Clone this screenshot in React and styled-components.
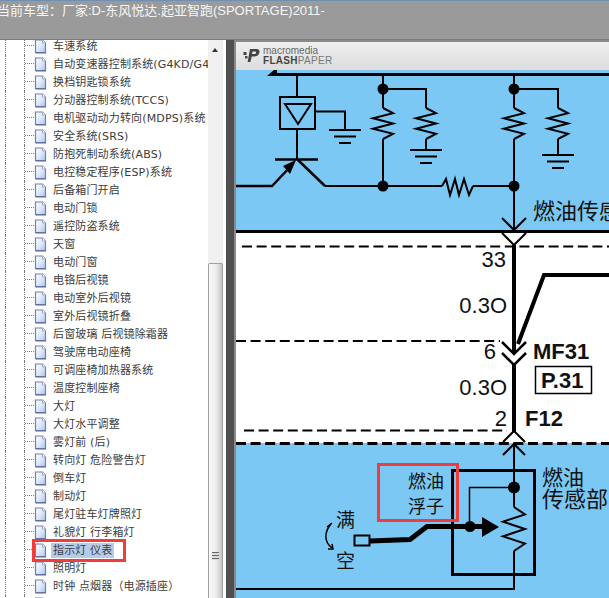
import React from 'react'
import styled, { createGlobalStyle } from 'styled-components'

const GlobalStyle = createGlobalStyle`
  html, body { margin: 0; padding: 0; background: #fff; }
  body { font-family: "DejaVu Sans", "Noto Sans CJK SC", sans-serif; }
`

const TREE_ITEMS = [
  '车速系统', '自动变速器控制系统(G4KD/G4KE)', '换档钥匙锁系统', '分动器控制系统(TCCS)',
  '电机驱动动力转向(MDPS)系统', '安全系统(SRS)', '防抱死制动系统(ABS)', '电控稳定程序(ESP)系统',
  '后备箱门开启', '电动门锁', '遥控防盗系统', '天窗', '电动门窗', '电铬后视镜', '电动室外后视镜',
  '室外后视镜折叠', '后窗玻璃 后视镜除霜器', '驾驶席电动座椅', '可调座椅加热器系统', '温度控制座椅',
  '大灯', '大灯水平调整', '雾灯前 (后)', '转向灯 危险警告灯', '倒车灯', '制动灯', '尾灯驻车灯牌照灯',
  '礼貌灯 行李箱灯', '指示灯 仪表', '照明灯', '时钟 点烟器（电源插座）', '',
]
const SELECTED = '指示灯 仪表'

const DocIcon = () => (
  <svg width="13" height="15" viewBox="0 0 13 15" style={{ flex: 'none' }}>
    <defs>
      <linearGradient id="doc" x1="0" y1="0" x2="1" y2="1">
        <stop offset="0" stopColor="#ffffff" />
        <stop offset="0.5" stopColor="#dfe9fb" />
        <stop offset="1" stopColor="#a9c2ee" />
      </linearGradient>
    </defs>
    <path d="M1.5 1H8.5L11.5 4V13.5H1.5Z" fill="url(#doc)" stroke="#6f80ad" strokeWidth="1.2" />
    <path d="M8.5 1V4H11.5" fill="#fff" stroke="#9aa8c8" />
    <path d="M1.5 14H12" stroke="#56659a" />
  </svg>
)

const Zigzag = ({ x, y, h, a = 10 }) => {
  const s = h / 6
  const d = `M${x} ${y} L${x + a} ${y + s} L${x - a} ${y + 2 * s} L${x + a} ${y + 3 * s} L${x - a} ${y + 4 * s} L${x + a} ${y + 5 * s} L${x} ${y + h}`
  return <path d={d} fill="none" stroke="#000" strokeWidth="2" />
}

const Ground = ({ x, y, w = 16, gap = 6.5 }) => (
  <g stroke="#000" strokeWidth="2">
    <path d={`M${x - w} ${y}H${x + w}`} />
    <path d={`M${x - w + 5} ${y + gap}H${x + w - 5}`} />
    <path d={`M${x - w + 10} ${y + gap * 2}H${x + w - 10}`} />
  </g>
)

const Dot = ({ x, y, r = 5.5 }) => <circle cx={x} cy={y} r={r} fill="#000" />

const Chevron = ({ x, y, up, w = 12, h = 12, sw = 2 }) => (
  <path d={`M${x - w} ${y + (up ? h : 0)}L${x} ${y + (up ? 0 : h)}L${x + w} ${y + (up ? h : 0)}`} fill="none" stroke="#000" strokeWidth={sw} />
)

const Label = ({ x, y, size, anchor, bold, children }) => (
  <DiagramText x={x} y={y} fontSize={size} textAnchor={anchor || 'start'} fontWeight={bold ? 700 : 400}>
    {children}
  </DiagramText>
)

const Schematic = () => (
  <Sheet viewBox="236 70 373 528">
    <rect x="236" y="70" width="373" height="160" fill="#7bc8f4" />
    <rect x="236" y="233" width="373" height="210" fill="#fff" />
    <rect x="236" y="443" width="373" height="155" fill="#7bc8f4" />

    {/* top section */}
    <path d="M267 76L274 70H277V76Z" fill="#000" />
    <path d="M270 74.5H609" stroke="#000" strokeWidth="3" />
    <g fill="none" stroke="#000" strokeWidth="2">
      <path d="M297 76V97" />
      <rect x="280" y="97" width="35" height="32" />
      <path d="M285 104H311L298 124Z" />
      <path d="M315 111.5H345V130" />
      <path d="M297 129V159" />
      <path d="M325 186H442M473 186H514" />
      <path d="M298 160L325 186" strokeWidth="2.5" />
      <path d="M236 186H272L292 165" strokeWidth="2.5" />
      <path d="M383 75V108M383 139V186" />
      <path d="M383 89H426V108M426 139V150" />
      <path d="M514 75V108M514 139V229" />
      <path d="M514 89H558V108M558 139V155" />
    </g>
    <path d="M275 159.5H318" stroke="#000" strokeWidth="2.5" />
    <path d="M296 160L283 166L290 174Z" fill="#000" />
    <Ground x={345} y={130} />
    <Ground x={426} y={150} />
    <Ground x={558} y={155} />
    <Zigzag x={383} y={108} h={31} />
    <Zigzag x={426} y={108} h={31} />
    <Zigzag x={514} y={108} h={31} />
    <Zigzag x={558} y={108} h={31} />
    <path d="M442 186L446 179L450 195L455 179L459 195L464 179L469 195L473 186" fill="none" stroke="#000" strokeWidth="2" />
    <Dot x={383} y={89} />
    <Dot x={514} y={89} />
    <Dot x={383} y={186} />
    <Dot x={514} y={186} />
    <Chevron x={514} y={218} />
    <path d="M236 231.5H609" stroke="#000" strokeWidth="3" />
    <Chevron x={514} y={233} />
    <Label x={533} y={219} size={22}>燃油传感器</Label>

    {/* white section */}
    <path d="M242 246.5H609" stroke="#000" strokeWidth="2" strokeDasharray="10 4.6" />
    <path d="M514 245V352M514 364V432" stroke="#000" strokeWidth="4" />
    <path d="M518 344L544 275H609" fill="none" stroke="#000" strokeWidth="4" />
    <Label x={506} y={267} size={22} anchor="end">33</Label>
    <Label x={507} y={313} size={22} anchor="end">0.3O</Label>
    <path d="M236 341H500" stroke="#000" strokeWidth="2" strokeDasharray="10 4.6" />
    <Chevron x={514} y={342} sw={2.5} />
    <Chevron x={514} y={353} sw={2.5} />
    <Label x={496} y={359} size={22} anchor="end">6</Label>
    <Label x={533} y={359} size={22} bold>MF31</Label>
    <rect x="535.5" y="366.5" width="56" height="27" fill="#fff" stroke="#000" strokeWidth="1.5" />
    <Label x={541} y={388} size={22} bold>P.31</Label>
    <Label x={507} y={395} size={22} anchor="end">0.3O</Label>
    <Label x={507} y={426} size={22} anchor="end">2</Label>
    <Label x={525} y={426} size={22} bold>F12</Label>
    <path d="M244 430.5H507" stroke="#000" strokeWidth="2" strokeDasharray="10 4.6" />

    {/* bottom section */}
    <path d="M236 443.5H609" stroke="#000" strokeWidth="3" strokeDasharray="10 4.6" />
    <Chevron x={514} y={431} up w={11} h={11} />
    <Chevron x={514} y={444} up w={11} h={11} />
    <path d="M514 444V507M514 551V589H236" fill="none" stroke="#000" strokeWidth="2" />
    <rect x="452.5" y="470.5" width="82" height="104" fill="none" stroke="#000" strokeWidth="3" />
    <path d="M514 487.5H469.5V526" fill="none" stroke="#000" strokeWidth="1.5" />
    <Dot x={514} y={487.5} r={6} />
    <Zigzag x={514} y={507} h={44} a={11} />
    <rect x="354.5" y="535.5" width="15" height="10" fill="none" stroke="#000" strokeWidth="2" />
    <path d="M370 541L410 539.5L427 526.5H484" fill="none" stroke="#000" strokeWidth="5" />
    <Dot x={470} y={526.5} />
    <path d="M482 517L499 527L482 537Z" fill="#000" />
    <Label x={408} y={488} size={18}>燃油</Label>
    <Label x={408} y={513} size={18}>浮子</Label>
    <Label x={542} y={485} size={21}>燃油</Label>
    <Label x={542} y={507} size={22}>传感部</Label>
    <Label x={336} y={527} size={19}>满</Label>
    <Label x={336} y={568} size={19}>空</Label>
    <path d="M331 524C324 532 324 542 332 548" fill="none" stroke="#000" strokeWidth="1.5" />
    <path d="M327 527L332 523M328 549L333 549L332 544" fill="none" stroke="#000" strokeWidth="1.5" />
  </Sheet>
)

export default function App() {
  return (
    <Page>
      <GlobalStyle />
      <TitleBar>当前车型：厂家:D-东风悦达.起亚智跑(SPORTAGE)2011-</TitleBar>
      <Body>
        <TreePane>
          {TREE_ITEMS.map((item, i) => (
            <TreeRow key={i}>
              <Indent />
              <Branch />
              <DocIcon />
              <RowLabel $selected={item === SELECTED}>{item}</RowLabel>
            </TreeRow>
          ))}
          <Callout $x={32} $y={499} $w={94} $h={23} />
        </TreePane>
        <ScrollBar>
          <ScrollUp />
          <ScrollThumb>
            <Grip />
          </ScrollThumb>
        </ScrollBar>
        <Splitter />
        <Viewer>
          <ViewerBar>
            <svg width="17" height="16" viewBox="0 0 17 16">
              <path d="M7 1H13.5C16 1 17 3 16.3 5C15.6 7.5 13.5 8.5 11 8.5H8.8L7.4 14H4.6Z" fill="#444" />
              <path d="M9.5 3.4L9 6H11.5C13 6 13.8 4 12.4 3.4Z" fill="#e8e8e8" />
              <rect x="0.5" y="4" width="3" height="3" fill="#444" />
              <rect x="2" y="8" width="2.5" height="2.5" fill="#444" />
            </svg>
            <BrandText>
              <BrandTop>macromedia</BrandTop>
              <BrandBottom>
                <b>FLASH</b>PAPER
              </BrandBottom>
            </BrandText>
          </ViewerBar>
          <SheetWrap>
            <Schematic />
            <Callout $x={141} $y={393} $w={82} $h={59} />
          </SheetWrap>
        </Viewer>
      </Body>
    </Page>
  )
}

const Page = styled.div`
  width: 609px;
  height: 598px;
  overflow: hidden;
  display: flex;
  flex-direction: column;
  background: #fff;
`
const TitleBar = styled.div`
  flex: 0 0 40px;
  box-sizing: border-box;
  border-top: 1px solid #6f8fb5;
  border-bottom: 1px solid #7a7a7a;
  background: #9a9a9a;
  color: #f6f6f6;
  font-family: "Liberation Sans", "Noto Sans CJK SC", sans-serif;
  font-size: 13px;
  line-height: 19px;
  white-space: nowrap;
  text-indent: -3px;
`
const Body = styled.div`
  flex: 1;
  display: flex;
  min-height: 0;
`
const TreePane = styled.div`
  position: relative;
  flex: 0 0 208px;
  overflow: hidden;
  background: #fff;
`
const TreeRow = styled.div`
  display: flex;
  align-items: center;
  height: 18px;
  position: relative;
  top: -3px;
  white-space: nowrap;
`
const Indent = styled.span`
  flex: none;
  align-self: stretch;
  width: 18px;
  margin-left: 5px;
  border-left: 1px dotted #777;
`
const Branch = styled.span`
  flex: none;
  align-self: stretch;
  position: relative;
  width: 9px;
  border-left: 1px dotted #777;
  &::after {
    content: '';
    position: absolute;
    left: 0;
    right: 0;
    top: 8px;
    border-top: 1px dotted #777;
  }
`
const RowLabel = styled.span`
  margin-left: 4px;
  padding: 0 2px;
  font-size: 11px;
  line-height: 15px;
  letter-spacing: 0.15px;
  color: #3c3c3c;
  background: ${p => (p.$selected ? '#b5cbea' : 'transparent')};
`
const Callout = styled.div`
  position: absolute;
  left: ${p => p.$x}px;
  top: ${p => p.$y}px;
  width: ${p => p.$w}px;
  height: ${p => p.$h}px;
  box-sizing: border-box;
  border: 3px solid #f23b3b;
  pointer-events: none;
`
const ScrollBar = styled.div`
  flex: 0 0 15px;
  display: flex;
  flex-direction: column;
  background: #f0f0f0;
`
const ScrollUp = styled.div`
  flex: 0 0 223px;
  position: relative;
  &::before {
    content: '';
    position: absolute;
    left: 4px;
    top: 8px;
    border-left: 3.5px solid transparent;
    border-right: 3.5px solid transparent;
    border-bottom: 4px solid #333;
  }
`
const ScrollThumb = styled.div`
  flex: 1;
  box-sizing: border-box;
  border: 1px solid #a0a0a0;
  border-bottom: none;
  border-radius: 2px 2px 0 0;
  background: linear-gradient(to right, #f6f6f6, #ececec 55%, #c4c4c4);
  position: relative;
`
const Grip = styled.div`
  position: absolute;
  left: 3px;
  top: 288px;
  width: 7px;
  height: 8px;
  background: repeating-linear-gradient(to bottom, #666 0 1px, #ddd 1px 3px);
`
const Splitter = styled.div`
  flex: 0 0 13px;
  box-sizing: border-box;
  border-left: 3px solid #fff;
  border-right: 2px solid #8a8a8a;
  background: #4f4f4f;
`
const Viewer = styled.div`
  flex: 1;
  min-width: 0;
  display: flex;
  flex-direction: column;
  background: #fff;
`
const ViewerBar = styled.div`
  flex: 0 0 30px;
  box-sizing: border-box;
  border-top: 2px solid #8a8a8a;
  display: flex;
  align-items: center;
  gap: 3px;
  padding-left: 7px;
  background: linear-gradient(to bottom, #efefef, #dcdcdc);
`
const BrandText = styled.div`
  display: flex;
  flex-direction: column;
  font-family: "Liberation Sans", sans-serif;
  color: #555;
  font-size: 10px;
  line-height: 10px;
`
const BrandTop = styled.span`
  color: #666;
`
const BrandBottom = styled.span`
  color: #777;
  letter-spacing: 0.3px;
  b {
    color: #444;
  }
`
const SheetWrap = styled.div`
  position: relative;
  flex: 1;
  min-height: 0;
`
const Sheet = styled.svg`
  display: block;
  width: 373px;
  height: 528px;
`
const DiagramText = styled.text`
  font-family: "Liberation Sans", "Noto Sans CJK SC", sans-serif;
  fill: #111;
`
